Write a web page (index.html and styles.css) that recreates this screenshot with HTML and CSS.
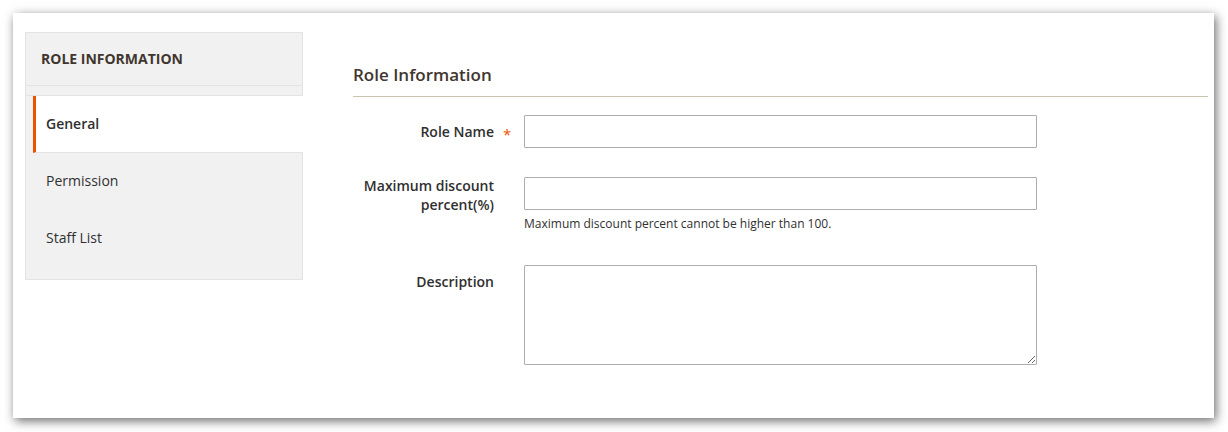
FILE: index.html
```html
<!DOCTYPE html>
<html lang="en">
<head>
<meta charset="utf-8">
<title>Role Information</title>
<link rel="stylesheet" href="styles.css">
</head>
<body>
<div class="page">
  <div class="panel">
    <aside class="sidebar">
      <div class="nav-title">ROLE INFORMATION</div>
      <ul class="nav-list">
        <li class="nav-item active">General</li>
        <li class="nav-item">Permission</li>
        <li class="nav-item">Staff List</li>
      </ul>
    </aside>
    <main class="main">
      <div class="section-title">Role Information</div>
      <div class="field">
        <label class="label"><span>Role Name</span></label>
        <span class="req">*</span>
        <div class="control"><input class="input" type="text"></div>
      </div>
      <div class="field">
        <label class="label"><span>Maximum discount percent(%)</span></label>
        <span class="req-empty"></span>
        <div class="control">
          <input class="input" type="text">
          <div class="note">Maximum discount percent cannot be higher than 100.</div>
        </div>
      </div>
      <div class="field">
        <label class="label"><span>Description</span></label>
        <span class="req-empty"></span>
        <div class="control"><textarea class="textarea"></textarea></div>
      </div>
    </main>
  </div>
</div>
</body>
</html>
```

FILE: styles.css
```css
* { box-sizing: border-box; }
html, body { margin: 0; padding: 0; background: #fff; }
body {
  font-family: "Open Sans", "Liberation Sans", sans-serif;
  font-size: 14px;
  color: #303030;
}
.page {
  padding: 13px 14px 14px 13px;
}
.panel {
  height: 405px;
  background: #fff;
  box-shadow: 2px 3px 10px rgba(0, 0, 0, 0.58);
  display: flex;
  align-items: flex-start;
  padding: 19px 6px 0 12px;
}
.sidebar {
  width: 278px;
  flex: none;
  background: #f1f1f1;
  border: 1px solid #e3e3e3;
}
.nav-title {
  padding: 16px 15px 16px;
  line-height: 20px;
  font-weight: 700;
  font-size: 14px;
  color: #41362f;
  border-bottom: 1px solid #e3e3e3;
  margin-bottom: 9px;
}
.nav-list {
  list-style: none;
  margin: 0;
  padding: 0 0 12px;
  border-top: 1px solid #e3e3e3;
}
.nav-item {
  margin-left: 7px;
  border-left: 3px solid transparent;
  border-bottom: 1px solid transparent;
  height: 57px;
  line-height: 56px;
  padding-left: 10px;
  color: #303030;
}
.nav-item.active {
  background: #fff;
  border-left-color: #eb5202;
  border-bottom-color: #e3e3e3;
  margin-right: -1px;
  font-weight: 600;
}
.main {
  flex: 1;
  margin-left: 50px;
  padding-top: 33px;
}
.section-title {
  font-size: 17px;
  font-weight: 600;
  line-height: 20px;
  color: #41362f;
  padding-bottom: 11px;
  border-bottom: 1px solid #cac3b4;
  margin-bottom: 18px;
}
.field {
  display: grid;
  grid-template-columns: 141px 30px 513px;
  align-items: start;
  margin-bottom: 29px;
}
.label {
  text-align: right;
  line-height: 31px;
  margin-top: -1px;
  font-weight: 600;
  color: #303030;
}
.label span {
  display: inline-block;
  line-height: 19px;
  vertical-align: middle;
}
.req {
  color: #eb5202;
  font-size: 15px;
  height: 33px;
  line-height: 28px;
  padding-top: 5px;
  padding-left: 9px;
}
.input {
  display: block;
  width: 513px;
  height: 33px;
  margin: 0;
  border: 1px solid #adadad;
  border-radius: 1px;
  background: #fff;
  font-family: inherit;
  font-size: 14px;
}
.textarea {
  display: block;
  width: 513px;
  height: 100px;
  margin: 0;
  border: 1px solid #adadad;
  border-radius: 1px;
  background: #fff;
  font-family: inherit;
  font-size: 14px;
}
.note {
  font-size: 12px;
  line-height: 18px;
  margin-top: 5px;
  margin-bottom: 3px;
  color: #303030;
}
```
